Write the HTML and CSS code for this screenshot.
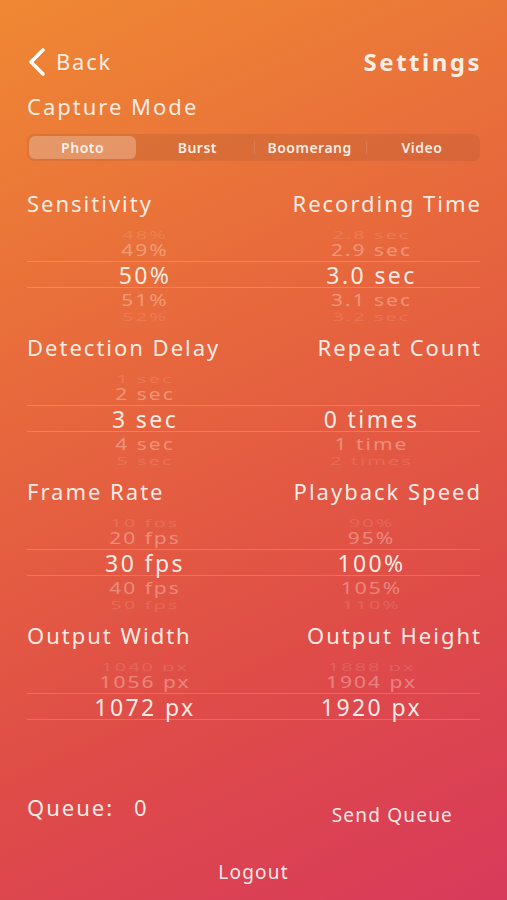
FILE: index.html
```html
<!DOCTYPE html>
<html lang="en">
<head>
    <meta charset="UTF-8">
    <meta name="viewport" content="width=device-width, initial-scale=1.0">
    <title>Settings</title>
    <link rel="stylesheet" href="styles.css">
</head>
<body>
    <div class="screen">
        <div class="nav">
            <div class="back">
                <svg class="chevron" width="20" height="30" viewBox="0 0 20 30">
                    <path d="M16 3 L4 15 L16 27" fill="none" stroke="#fff" stroke-width="3.6" stroke-linecap="round" stroke-linejoin="round"/>
                </svg>
                <span>Back</span>
            </div>
            <div class="title">Settings</div>
        </div>

        <div class="mode-label">Capture Mode</div>
        <div class="segmented">
            <div class="seg active">Photo</div>
            <div class="seg">Burst</div>
            <div class="seg divider">Boomerang</div>
            <div class="seg divider">Video</div>
        </div>

        <!-- picker sections -->
        <div class="section">
            <div class="labels"><span>Sensitivity</span><span>Recording Time</span></div>
            <div class="picker">
                <div class="wheel">
                    <div class="row edge top"><span>48%</span></div>
                    <div class="row near up"><span>49%</span></div>
                    <div class="row sel">50%</div>
                    <div class="row near down"><span>51%</span></div>
                    <div class="row edge bottom"><span>52%</span></div>
                </div>
                <div class="wheel">
                    <div class="row edge top"><span>2.8 sec</span></div>
                    <div class="row near up"><span>2.9 sec</span></div>
                    <div class="row sel">3.0 sec</div>
                    <div class="row near down"><span>3.1 sec</span></div>
                    <div class="row edge bottom"><span>3.2 sec</span></div>
                </div>
            </div>
        </div>

        <div class="section">
            <div class="labels"><span>Detection Delay</span><span>Repeat Count</span></div>
            <div class="picker">
                <div class="wheel">
                    <div class="row edge top"><span>1 sec</span></div>
                    <div class="row near up"><span>2 sec</span></div>
                    <div class="row sel">3 sec</div>
                    <div class="row near down"><span>4 sec</span></div>
                    <div class="row edge bottom"><span>5 sec</span></div>
                </div>
                <div class="wheel">
                    <div class="row edge top"></div>
                    <div class="row near up"></div>
                    <div class="row sel">0 times</div>
                    <div class="row near down"><span>1 time</span></div>
                    <div class="row edge bottom"><span>2 times</span></div>
                </div>
            </div>
        </div>

        <div class="section">
            <div class="labels"><span>Frame Rate</span><span>Playback Speed</span></div>
            <div class="picker">
                <div class="wheel">
                    <div class="row edge top"><span>10 fps</span></div>
                    <div class="row near up"><span>20 fps</span></div>
                    <div class="row sel">30 fps</div>
                    <div class="row near down"><span>40 fps</span></div>
                    <div class="row edge bottom"><span>50 fps</span></div>
                </div>
                <div class="wheel">
                    <div class="row edge top"><span>90%</span></div>
                    <div class="row near up"><span>95%</span></div>
                    <div class="row sel">100%</div>
                    <div class="row near down"><span>105%</span></div>
                    <div class="row edge bottom"><span>110%</span></div>
                </div>
            </div>
        </div>

        <div class="section">
            <div class="labels"><span>Output Width</span><span>Output Height</span></div>
            <div class="picker">
                <div class="wheel">
                    <div class="row edge top"><span>1040 px</span></div>
                    <div class="row near up"><span>1056 px</span></div>
                    <div class="row sel">1072 px</div>
                    <div class="row near down"></div>
                    <div class="row edge bottom"></div>
                </div>
                <div class="wheel">
                    <div class="row edge top"><span>1888 px</span></div>
                    <div class="row near up"><span>1904 px</span></div>
                    <div class="row sel">1920 px</div>
                    <div class="row near down"></div>
                    <div class="row edge bottom"></div>
                </div>
            </div>
        </div>

        <div class="queue">
            <div class="queue-count"><span>Queue:</span><span class="num">0</span></div>
            <div class="send">Send Queue</div>
        </div>

        <div class="logout">Logout</div>
    </div>
</body>
</html>
```

FILE: styles.css
```css
html, body {
    margin: 0;
    padding: 0;
}
body {
    width: 507px;
    height: 900px;
    overflow: hidden;
    font-family: "Noto Sans", "Open Sans", sans-serif;
    color: rgba(255, 246, 240, 0.95);
    background: linear-gradient(155deg, #ef8833 0%, #e7673d 38%, #df4c48 70%, #d83a5b 100%);
}
.screen {
    padding: 0 27px;
}
.nav {
    display: flex;
    justify-content: space-between;
    align-items: center;
    height: 34px;
    margin-top: 44px;
}
.back {
    display: flex;
    align-items: center;
    gap: 9px;
    font-size: 22px;
    letter-spacing: 1.8px;
}
.chevron {
    margin-top: 1px;
}
.title {
    font-size: 24px;
    font-weight: 700;
    letter-spacing: 2.5px;
    margin-right: -2px;
}
.mode-label {
    font-size: 22px;
    letter-spacing: 2px;
    line-height: 26px;
    margin-top: 15px;
}
.segmented {
    display: grid;
    grid-template-columns: repeat(4, 1fr);
    height: 27px;
    margin-top: 15px;
    padding: 2px;
    box-sizing: border-box;
    border-radius: 7px;
    background: rgba(110, 60, 50, 0.13);
}
.seg {
    display: flex;
    align-items: center;
    justify-content: center;
    font-size: 14px;
    font-weight: 600;
    letter-spacing: 0.5px;
    position: relative;
}
.seg.active {
    background: rgba(255, 235, 220, 0.3);
    border-radius: 6px;
    margin-right: 5px;
}
.seg.divider::before {
    content: "";
    position: absolute;
    left: 0;
    top: 5px;
    bottom: 5px;
    width: 1px;
    background: rgba(255, 255, 255, 0.12);
}
.section {
    height: 144px;
}
.segmented + .section {
    margin-top: 29px;
}
.labels {
    display: flex;
    justify-content: space-between;
    font-size: 22px;
    letter-spacing: 2px;
    line-height: 26px;
}
.labels span:last-child {
    margin-right: -2px;
}
.picker {
    display: grid;
    grid-template-columns: 236px 1fr;
    margin-top: 7px;
}
.wheel {
    display: flex;
    flex-direction: column;
    align-items: stretch;
}
.row {
    display: flex;
    align-items: center;
    justify-content: center;
    overflow: hidden;
    white-space: nowrap;
    letter-spacing: 2px;
}
.row span {
    display: block;
}
.row.sel {
    height: 27px;
    font-size: 23px;
    letter-spacing: 2.4px;
    overflow: visible;
    border-top: 1px solid rgba(255, 255, 255, 0.18);
    border-bottom: 1px solid rgba(255, 255, 255, 0.18);
    box-sizing: border-box;
    color: rgba(255, 246, 240, 0.95);
}
.row.near {
    font-size: 21px;
    color: rgba(255, 240, 230, 0.36);
}
.row.near span {
    transform: scaleY(0.8);
}
.row.near.up {
    height: 22px;
}
.row.near.down {
    height: 24px;
}
.row.edge {
    font-size: 20px;
    color: rgba(255, 240, 230, 0.14);
}
.row.edge span {
    transform: scaleY(0.5);
}
.row.edge.top {
    height: 16px;
    align-items: flex-end;
}
.row.edge.top span {
    transform-origin: bottom;
    margin-bottom: -3px;
}
.row.edge.bottom {
    height: 12px;
    align-items: flex-start;
}
.row.edge.bottom span {
    transform-origin: top;
    margin-top: -2px;
}
.queue {
    display: flex;
    justify-content: space-between;
    align-items: center;
    margin-top: 20px;
    padding-right: 27px;
}
.queue-count {
    font-size: 22px;
    letter-spacing: 2px;
    display: flex;
    gap: 20px;
}
.send {
    font-size: 19px;
    letter-spacing: 1.2px;
    margin-top: 16px;
}
.logout {
    text-align: center;
    font-size: 19px;
    letter-spacing: 1.2px;
    margin-top: 31px;
}
```
